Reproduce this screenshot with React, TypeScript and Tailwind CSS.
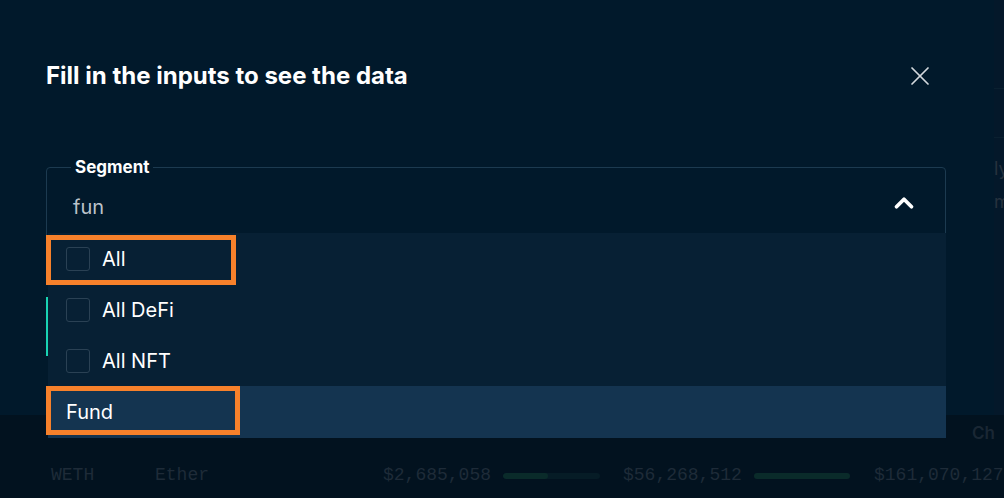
import { X, ChevronUp } from "lucide-react";

const options = [
  { label: "All", checkbox: true, marked: true },
  { label: "All DeFi", checkbox: true, marked: false },
  { label: "All NFT", checkbox: true, marked: false },
];

export default function App() {
  return (
    <div
      className="relative w-[1004px] h-[498px] overflow-hidden bg-[#02121f]"
      style={{ fontFamily: "Inter, 'Noto Sans', sans-serif" }}
    >
      {/* page behind the dialog (dimmed) */}
      <div className="flex h-[415px]">
        <div className="w-[994px] shrink-0" />
        <div className="flex-1 flex flex-col bg-[#04182a] overflow-hidden">
          <div className="h-[89px] border-b border-[#0a2030]" />
          <div className="h-[49px] border-b border-[#0a2030]" />
          <div className="pt-[14px] text-[18px] leading-[33px] text-[#26323e] whitespace-nowrap">
            <div>ly</div>
            <div>m</div>
          </div>
        </div>
      </div>
      <div className="h-[83px] bg-[#02121f]">
        <div className="h-[38px] flex items-center whitespace-nowrap text-[17px] font-semibold text-[#1a2734]">
          <span className="ml-[972px]">Ch</span>
        </div>
        <div
          className="flex items-center h-[45px] text-[18px] text-[#1e2b38] whitespace-nowrap"
          style={{ fontFamily: "'Liberation Mono', monospace" }}
        >
          <span className="ml-[51px] w-[104px] shrink-0">WETH</span>
          <span className="w-[228px] shrink-0">Ether</span>
          <span className="w-[108px] shrink-0">$2,685,058</span>
          <span className="ml-[12px] w-[97px] shrink-0 h-[6px] rounded-full bg-[#061c26] overflow-hidden">
            <span className="block h-full w-[45px] rounded-full bg-[#0a2b2a]" />
          </span>
          <span className="ml-[23px] w-[118px] shrink-0">$56,268,512</span>
          <span className="ml-[13px] w-[96px] shrink-0 h-[6px] rounded-full bg-[#0a2b2a]" />
          <span className="ml-[24px]">$161,070,127</span>
        </div>
      </div>

      {/* dialog */}
      <div className="absolute left-0 top-0 w-[994px] h-[415px] bg-[#01192b]">
        <div className="flex items-center justify-between pl-[46px] pr-[57px] pt-[60px]">
          <h2 className="text-[24px] font-bold leading-[32px] text-white">
            Fill in the inputs to see the data
          </h2>
          <X className="w-[32px] h-[32px] text-[#d3d8dd] mr-[1px]" strokeWidth={1.3} />
        </div>

        <div className="relative mx-[46px] mt-[73px] w-[900px]">
          <fieldset className="h-[80px] rounded-[4px] border border-[#1c3a50] pl-[26px] pr-[24px]">
            <legend className="ml-[-2px] px-[4px] text-[17px] font-bold leading-[4px] text-white">
              Segment
            </legend>
            <div className="flex items-center justify-between pt-[26px]">
              <span className="text-[20px] text-[#bcc3ca] leading-[24px]">fun</span>
              <ChevronUp className="w-[30px] h-[30px] text-white mr-[2px] mt-[-8px]" strokeWidth={3} />
            </div>
          </fieldset>

          {/* field under the open list */}
          <div className="mt-[52px] h-[59px] border-l-2 border-r border-[#19d3b3]" />

          {/* open list */}
          <ul className="absolute left-[2px] right-0 top-[68px] bg-[#072034]">
            {options.map((o) => (
              <li key={o.label} className="relative flex items-center gap-[12px] h-[51px] px-[18px]">
                <span className="w-[24px] h-[24px] rounded-[3px] border-[1.5px] border-[#2a4154]" />
                <span className="text-[20px] text-white">{o.label}</span>
                {o.marked && (
                  <span className="absolute left-[-2px] top-[2px] w-[190px] h-[50px] border-[5px] border-[#f7812b]" />
                )}
              </li>
            ))}
            <li className="relative flex items-center h-[52px] px-[18px] bg-[#143450]">
              <span className="text-[20px] text-white">Fund</span>
              <span className="absolute left-[-2px] top-0 w-[194px] h-[49px] border-[5px] border-[#f7812b]" />
            </li>
          </ul>
        </div>
      </div>
    </div>
  );
}
